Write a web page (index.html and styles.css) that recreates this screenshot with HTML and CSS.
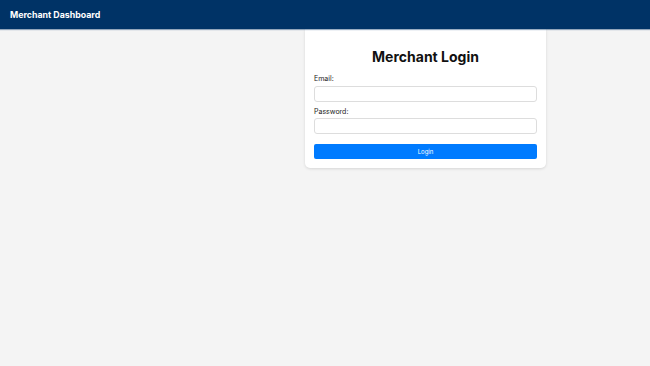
FILE: index.html
```html
<!DOCTYPE html>
<html>
<head>
<meta charset="utf-8">
<link rel="stylesheet" href="styles.css">
</head>
<body>
<header class="topbar">Merchant Dashboard</header>
<main class="main">
  <div class="spacer"></div>
  <section class="card">
    <h2 class="title">Merchant Login</h2>
    <label class="label">Email:</label>
    <input class="input" type="email">
    <label class="label">Password:</label>
    <input class="input input-last" type="password">
    <button class="btn">Login</button>
  </section>
</main>
</body>
</html>
```
FILE: styles.css
```css
* { box-sizing: border-box; }
html, body { margin: 0; padding: 0; }
body {
  background: #f4f4f4;
  font-family: Inter, "Liberation Sans", Arial, sans-serif;
  color: #111;
  height: 366px;
}
.topbar {
  background: #003366;
  color: #fff;
  height: 29px;
  padding-left: 10px;
  display: flex;
  align-items: center;
  font-size: 8.8px;
  font-weight: 700;
  box-shadow: 0 1px 1px rgba(0,51,102,0.4);
  position: relative;
  z-index: 1;
}
.main {
  display: flex;
}
.spacer { width: 305px; flex: none; }
.card {
  width: 241px;
  background: #fff;
  border-radius: 0 0 5px 5px;
  box-shadow: 0 1px 3px rgba(0,0,0,0.12);
  padding: 19px 9px 9px;
  display: flex;
  flex-direction: column;
}
.title {
  margin: 0 0 9px;
  text-align: center;
  font-size: 14px;
  line-height: 17px;
  font-weight: 700;
}
.label {
  font-size: 7px;
  line-height: 9px;
  margin-bottom: 3px;
  color: #222;
}
.input {
  height: 16px;
  border: 1px solid #ddd;
  border-radius: 3px;
  margin: 0 0 5px;
  padding: 0 4px;
}
.input + .label { margin-bottom: 2px; }
.input-last { margin-bottom: 10px; }
.btn {
  height: 15px;
  background: #007bff;
  color: #fff;
  border: none;
  border-radius: 2px;
  font-family: inherit;
  font-size: 6px;
  padding: 0;
}
```
